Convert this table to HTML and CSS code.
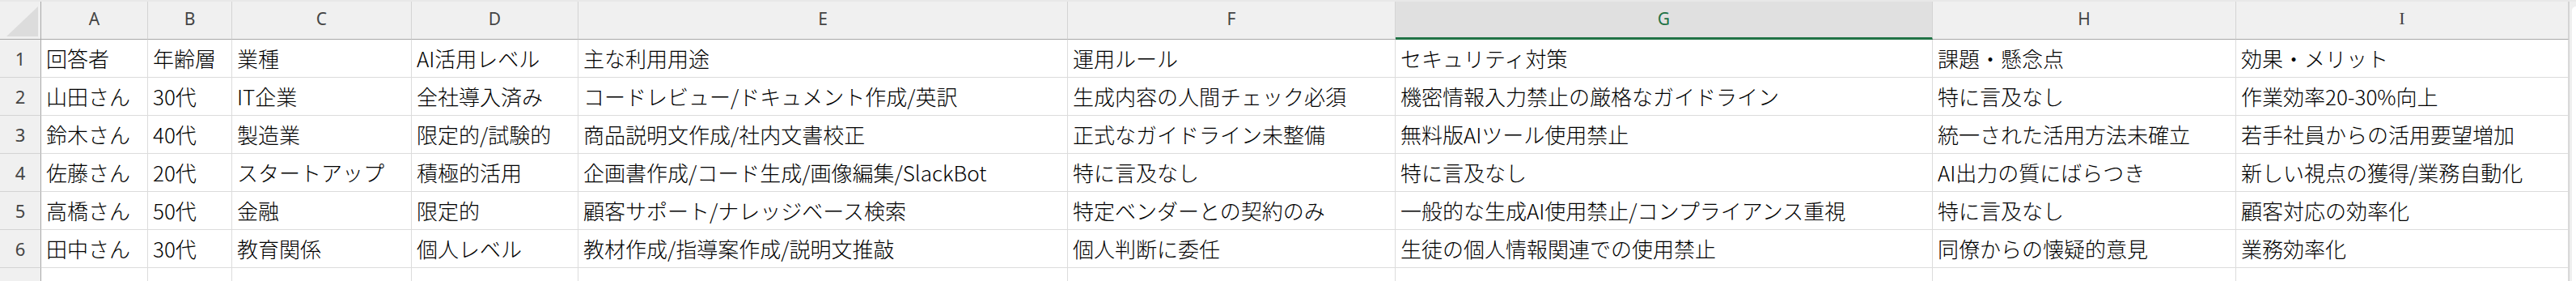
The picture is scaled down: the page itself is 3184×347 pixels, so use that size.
FILE: index.html
```html
<!DOCTYPE html>
<html lang="ja">
<head>
<meta charset="utf-8">
<title>Sheet</title>
<link rel="stylesheet" href="styles.css">
</head>
<body>
<div class="app">
  <div class="sheet">
    <div class="corner"><div class="tri"></div></div>
    <div class="h">A</div>
    <div class="h">B</div>
    <div class="h">C</div>
    <div class="h">D</div>
    <div class="h">E</div>
    <div class="h">F</div>
    <div class="h sel">G</div>
    <div class="h">H</div>
    <div class="h serif">I</div>

    <div class="rn">1</div>
    <div class="c">回答者</div><div class="c">年齢層</div><div class="c">業種</div><div class="c">AI活用レベル</div><div class="c">主な利用用途</div><div class="c">運用ルール</div><div class="c">セキュリティ対策</div><div class="c">課題・懸念点</div><div class="c">効果・メリット</div>

    <div class="rn">2</div>
    <div class="c">山田さん</div><div class="c">30代</div><div class="c">IT企業</div><div class="c">全社導入済み</div><div class="c">コードレビュー/ドキュメント作成/英訳</div><div class="c">生成内容の人間チェック必須</div><div class="c">機密情報入力禁止の厳格なガイドライン</div><div class="c">特に言及なし</div><div class="c">作業効率20-30%向上</div>

    <div class="rn">3</div>
    <div class="c">鈴木さん</div><div class="c">40代</div><div class="c">製造業</div><div class="c">限定的/試験的</div><div class="c">商品説明文作成/社内文書校正</div><div class="c">正式なガイドライン未整備</div><div class="c">無料版AIツール使用禁止</div><div class="c">統一された活用方法未確立</div><div class="c">若手社員からの活用要望増加</div>

    <div class="rn">4</div>
    <div class="c">佐藤さん</div><div class="c">20代</div><div class="c">スタートアップ</div><div class="c">積極的活用</div><div class="c">企画書作成/コード生成/画像編集/SlackBot</div><div class="c">特に言及なし</div><div class="c">特に言及なし</div><div class="c">AI出力の質にばらつき</div><div class="c">新しい視点の獲得/業務自動化</div>

    <div class="rn">5</div>
    <div class="c">高橋さん</div><div class="c">50代</div><div class="c">金融</div><div class="c">限定的</div><div class="c">顧客サポート/ナレッジベース検索</div><div class="c">特定ベンダーとの契約のみ</div><div class="c">一般的な生成AI使用禁止/コンプライアンス重視</div><div class="c">特に言及なし</div><div class="c">顧客対応の効率化</div>

    <div class="rn">6</div>
    <div class="c">田中さん</div><div class="c">30代</div><div class="c">教育関係</div><div class="c">個人レベル</div><div class="c">教材作成/指導案作成/説明文推敲</div><div class="c">個人判断に委任</div><div class="c">生徒の個人情報関連での使用禁止</div><div class="c">同僚からの懐疑的意見</div><div class="c">業務効率化</div>

    <div class="rn">7</div>
    <div class="c"></div><div class="c"></div><div class="c"></div><div class="c"></div><div class="c"></div><div class="c"></div><div class="c"></div><div class="c"></div><div class="c"></div>
  </div>
  <div class="side"><div class="panel"></div></div>
</div>
</body>
</html>
```
FILE: styles.css
```css
html, body {
  margin: 0;
  padding: 0;
  height: 100%;
  overflow: hidden;
  background: #e8e8e8;
}
.app {
  display: flex;
  padding-top: 2px;
  height: 345px;
}
.sheet {
  display: grid;
  grid-template-columns: 51px 132px 104px 222px 206px 605px 405px 664px 375px 411px;
  grid-template-rows: 47px repeat(7, 47px);
  background: #ffffff;
  font-family: "Noto Sans CJK JP", "Noto Sans", sans-serif;
  color: #000;
}
.corner {
  background: #f0f0f0;
  border-right: 1px solid #a8a8a8;
  border-bottom: 1px solid #a8a8a8;
  display: flex;
  align-items: flex-end;
  justify-content: flex-end;
  padding: 0 3px 3px 0;
  box-sizing: border-box;
}
.tri {
  width: 39px;
  height: 37px;
  background: #dcdcdc;
  clip-path: polygon(100% 0, 100% 100%, 0 100%);
}
.h {
  background: #f0f0f0;
  border-right: 1px solid #d4d4d4;
  border-bottom: 1px solid #a8a8a8;
  box-sizing: border-box;
  display: flex;
  align-items: center;
  justify-content: center;
  font-family: "Noto Sans", "Open Sans", sans-serif;
  font-size: 21px;
  color: #444;
  padding-bottom: 4px;
}
.h.sel {
  background: #e0e0e0;
  color: #217346;
  border-bottom: 3px solid #217346;
  padding-bottom: 2px;
}
.h.serif {
  font-family: "Liberation Serif", serif;
  font-size: 22px;
}
.rn {
  background: #f0f0f0;
  border-right: 1px solid #a8a8a8;
  border-bottom: 1px solid #d4d4d4;
  box-sizing: border-box;
  display: flex;
  align-items: center;
  justify-content: center;
  font-family: "Noto Sans", "Open Sans", sans-serif;
  font-size: 22px;
  color: #444;
}
.c {
  border-right: 1px solid #dcdcdc;
  border-bottom: 1px solid #dcdcdc;
  box-sizing: border-box;
  display: flex;
  align-items: center;
  padding-left: 6px;
  font-size: 26px;
  font-weight: 300;
  white-space: nowrap;
  overflow: hidden;
  line-height: 1;
}
.side {
  flex: 1;
  background: #efefef;
  border-left: 1px solid #d4d4d4;
  padding: 6px 0 0 3px;
}
.panel {
  height: 100%;
  background: #ffffff;
  border-top-left-radius: 8px;
}
```
